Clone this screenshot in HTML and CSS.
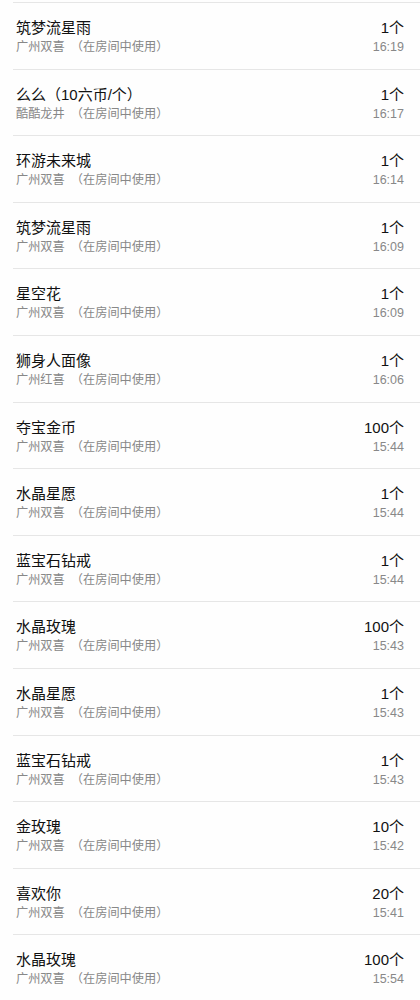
FILE: index.html
```html
<!DOCTYPE html>
<html lang="zh-CN">
<head>
  <meta charset="UTF-8">
  <title>礼物记录</title>
  <meta name="viewport" content="width=device-width, initial-scale=1.0">
  <link rel="stylesheet" href="styles.css">
</head>
<body>
  <ul class="gift-list">
    <li class="gift"><div class="info"><div class="name">筑梦流星雨</div><div class="from">广州双喜　（在房间中使用）</div></div><div class="meta"><div class="count">1个</div><div class="time">16:19</div></div></li>
    <li class="gift"><div class="info"><div class="name">么么（10六币/个）</div><div class="from">酷酷龙井　（在房间中使用）</div></div><div class="meta"><div class="count">1个</div><div class="time">16:17</div></div></li>
    <li class="gift"><div class="info"><div class="name">环游未来城</div><div class="from">广州双喜　（在房间中使用）</div></div><div class="meta"><div class="count">1个</div><div class="time">16:14</div></div></li>
    <li class="gift"><div class="info"><div class="name">筑梦流星雨</div><div class="from">广州双喜　（在房间中使用）</div></div><div class="meta"><div class="count">1个</div><div class="time">16:09</div></div></li>
    <li class="gift"><div class="info"><div class="name">星空花</div><div class="from">广州双喜　（在房间中使用）</div></div><div class="meta"><div class="count">1个</div><div class="time">16:09</div></div></li>
    <li class="gift"><div class="info"><div class="name">狮身人面像</div><div class="from">广州红喜　（在房间中使用）</div></div><div class="meta"><div class="count">1个</div><div class="time">16:06</div></div></li>
    <li class="gift"><div class="info"><div class="name">夺宝金币</div><div class="from">广州双喜　（在房间中使用）</div></div><div class="meta"><div class="count">100个</div><div class="time">15:44</div></div></li>
    <li class="gift"><div class="info"><div class="name">水晶星愿</div><div class="from">广州双喜　（在房间中使用）</div></div><div class="meta"><div class="count">1个</div><div class="time">15:44</div></div></li>
    <li class="gift"><div class="info"><div class="name">蓝宝石钻戒</div><div class="from">广州双喜　（在房间中使用）</div></div><div class="meta"><div class="count">1个</div><div class="time">15:44</div></div></li>
    <li class="gift"><div class="info"><div class="name">水晶玫瑰</div><div class="from">广州双喜　（在房间中使用）</div></div><div class="meta"><div class="count">100个</div><div class="time">15:43</div></div></li>
    <li class="gift"><div class="info"><div class="name">水晶星愿</div><div class="from">广州双喜　（在房间中使用）</div></div><div class="meta"><div class="count">1个</div><div class="time">15:43</div></div></li>
    <li class="gift"><div class="info"><div class="name">蓝宝石钻戒</div><div class="from">广州双喜　（在房间中使用）</div></div><div class="meta"><div class="count">1个</div><div class="time">15:43</div></div></li>
    <li class="gift"><div class="info"><div class="name">金玫瑰</div><div class="from">广州双喜　（在房间中使用）</div></div><div class="meta"><div class="count">10个</div><div class="time">15:42</div></div></li>
    <li class="gift"><div class="info"><div class="name">喜欢你</div><div class="from">广州双喜　（在房间中使用）</div></div><div class="meta"><div class="count">20个</div><div class="time">15:41</div></div></li>
    <li class="gift"><div class="info"><div class="name">水晶玫瑰</div><div class="from">广州双喜　（在房间中使用）</div></div><div class="meta"><div class="count">100个</div><div class="time">15:54</div></div></li>
  </ul>
</body>
</html>
```

FILE: styles.css
```css
body { margin: 0; background: #fefefe; font-family: "Liberation Sans", "Noto Sans CJK SC", sans-serif; color: #111; }
.gift-list { list-style: none; margin: 0; padding: 2px 0 0 13px; }
.gift { display: flex; justify-content: space-between; height: 66.6px; box-sizing: border-box; border-top: 1px solid #e6e6e6; padding: 15px 16px 0 3px; }
.name { font-size: 15px; line-height: 20px; color: #111; }
.from { font-size: 12.2px; line-height: 18px; color: #888; }
.meta { text-align: right; }
.count { font-size: 15px; line-height: 20px; color: #111; }
.time { font-size: 12.5px; line-height: 18px; color: #888; }
```
